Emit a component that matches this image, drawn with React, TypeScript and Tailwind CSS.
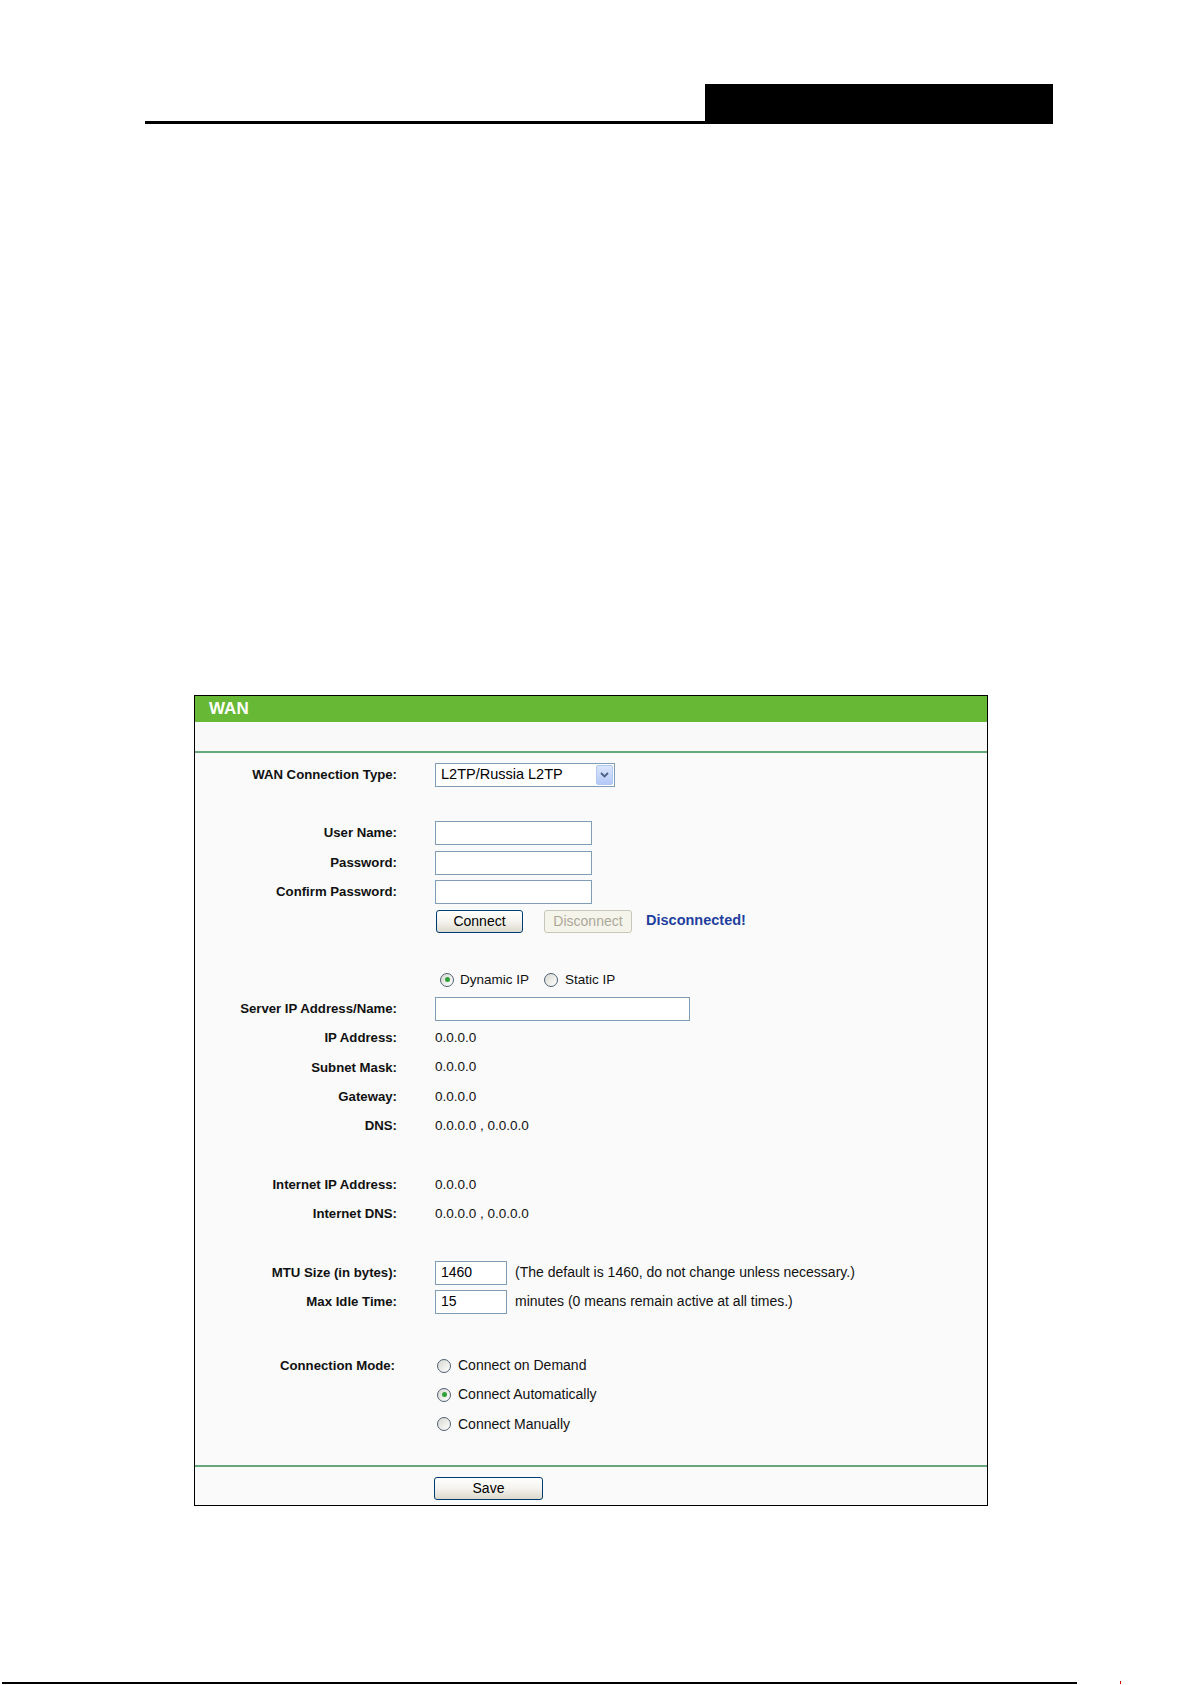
import React from 'react'

const Label: React.FC<{ children?: React.ReactNode; className?: string }> = ({ children, className = '' }) => (
  <div className={`w-[202px] shrink-0 text-right text-[13.2px] font-bold text-[#111] ${className}`}>{children}</div>
)

const Row: React.FC<{ label?: string; children?: React.ReactNode; className?: string }> = ({ label, children, className = '' }) => (
  <div className={`flex h-[29.3px] items-center ${className}`}>
    <Label>{label}</Label>
    <div className="ml-[38px] flex items-center text-[13.5px] text-[#111]">{children}</div>
  </div>
)

const Spacer = () => <div className="h-[29.3px]" />

const TextBox: React.FC<{ width: string; value?: string }> = ({ width, value }) => (
  <div className={`${width} flex h-[24px] items-center border border-[#7f9db9] bg-white pl-[5px] text-[14px] text-black`}>
    {value}
  </div>
)

const Radio: React.FC<{ checked?: boolean }> = ({ checked }) => (
  <span className="flex h-[14px] w-[14px] shrink-0 items-center justify-center rounded-full border border-[#4f6072] bg-gradient-to-br from-[#d8d8d0] to-white">
    {checked && <span className="h-[5px] w-[5px] rounded-full bg-[#30a03a]" />}
  </span>
)

const XpButton: React.FC<{ width: string; children: React.ReactNode; disabled?: boolean }> = ({ width, children, disabled }) => (
  <div
    className={`${width} flex h-[23px] items-center justify-center rounded-[3px] border text-[14px] ${
      disabled
        ? 'border-[#c9c7ba] bg-[#f5f4ea] text-[#aca899]'
        : 'border-[#003c74] bg-gradient-to-b from-white via-[#f4f3ee] to-[#dcd9cc] text-black'
    }`}
  >
    {children}
  </div>
)

const ModeRow: React.FC<{ label?: string; checked?: boolean; text: string }> = ({ label, checked, text }) => (
  <div className="flex h-[29.3px] items-center">
    <Label className="pr-[2px]">{label}</Label>
    <div className="ml-[38px] flex items-center pl-[2px] text-[14px] text-[#111]">
      <Radio checked={checked} />
      <span className="ml-[7px]">{text}</span>
    </div>
  </div>
)

export default function App() {
  return (
    <div className="h-[1685px] w-[1192px] overflow-hidden bg-white font-['Liberation_Sans',Arial,sans-serif]">
      {/* page header rule */}
      <div className="ml-[145px] flex items-end pt-[84px]">
        <div className="h-[3px] w-[560px] bg-black" />
        <div className="h-[40px] w-[348px] bg-black" />
      </div>

      {/* WAN panel */}
      <div className="ml-[194px] mt-[571px] w-[794px] border border-black bg-[#fafafa]">
        <div className="flex h-[26px] items-center bg-[#67b834] pl-[14px] text-[17px] font-bold text-white">WAN</div>
        <div className="h-[29px] bg-[#f9f9f9]" />
        <div className="h-[2px] bg-[#68a67b]" />

        <div className="pb-[26px] pt-[7px]">
          <Row label="WAN Connection Type:">
            <div className="flex h-[24px] w-[180px] items-center justify-between border border-[#7f9db9] bg-white pl-[5px] pr-[1px] text-[14.5px] text-black">
              <span>L2TP/Russia L2TP</span>
              <span className="flex h-[20px] w-[17px] items-center justify-center rounded-[2px] border border-[#b4c8f0] bg-gradient-to-b from-[#dbe6fd] to-[#b3c9f7]">
                <svg width="9" height="6" viewBox="0 0 9 6">
                  <path d="M1 1l3.5 3.5L8 1" fill="none" stroke="#4d6185" strokeWidth="1.8" />
                </svg>
              </span>
            </div>
          </Row>
          <Spacer />
          <Row label="User Name:">
            <TextBox width="w-[157px]" />
          </Row>
          <Row label="Password:">
            <TextBox width="w-[157px]" />
          </Row>
          <Row label="Confirm Password:">
            <TextBox width="w-[157px]" />
          </Row>
          <Row>
            <div className="ml-[1px] flex items-center">
              <XpButton width="w-[87px]">Connect</XpButton>
              <div className="ml-[21px]">
                <XpButton width="w-[88px]" disabled>
                  Disconnect
                </XpButton>
              </div>
              <span className="ml-[14px] text-[14.5px] font-bold text-[#1f3f9f]">Disconnected!</span>
            </div>
          </Row>
          <Spacer />
          <Row>
            <div className="ml-[5px] flex items-center">
              <Radio checked />
              <span className="ml-[6px]">Dynamic IP</span>
              <span className="ml-[15px]">
                <Radio />
              </span>
              <span className="ml-[7px]">Static IP</span>
            </div>
          </Row>
          <Row label="Server IP Address/Name:">
            <TextBox width="w-[255px]" />
          </Row>
          <Row label="IP Address:">0.0.0.0</Row>
          <Row label="Subnet Mask:">0.0.0.0</Row>
          <Row label="Gateway:">0.0.0.0</Row>
          <Row label="DNS:">0.0.0.0 , 0.0.0.0</Row>
          <Spacer />
          <Row label="Internet IP Address:">0.0.0.0</Row>
          <Row label="Internet DNS:">0.0.0.0 , 0.0.0.0</Row>
          <Spacer />
          <Row label="MTU Size (in bytes):">
            <TextBox width="w-[72px]" value="1460" />
            <span className="ml-[8px] text-[14px]">(The default is 1460, do not change unless necessary.)</span>
          </Row>
          <Row label="Max Idle Time:">
            <TextBox width="w-[72px]" value="15" />
            <span className="ml-[8px] text-[14px]">minutes (0 means remain active at all times.)</span>
          </Row>
          <Spacer />

          <div className="mt-[5px]">
            <ModeRow label="Connection Mode:" text="Connect on Demand" />
            <ModeRow checked text="Connect Automatically" />
            <ModeRow text="Connect Manually" />
          </div>
        </div>

        <div className="h-[2px] bg-[#68a67b]" />
        <div className="pb-[5px] pl-[239px] pt-[10px]">
          <XpButton width="w-[109px]">Save</XpButton>
        </div>
      </div>

      {/* page footer rule */}
      <div className="ml-[2px] mt-[175px] flex items-end">
        <div className="h-[2px] w-[1075px] bg-black" />
        <div className="ml-[43px] h-[3px] w-[1px] bg-[#e00000]" />
      </div>
    </div>
  )
}
